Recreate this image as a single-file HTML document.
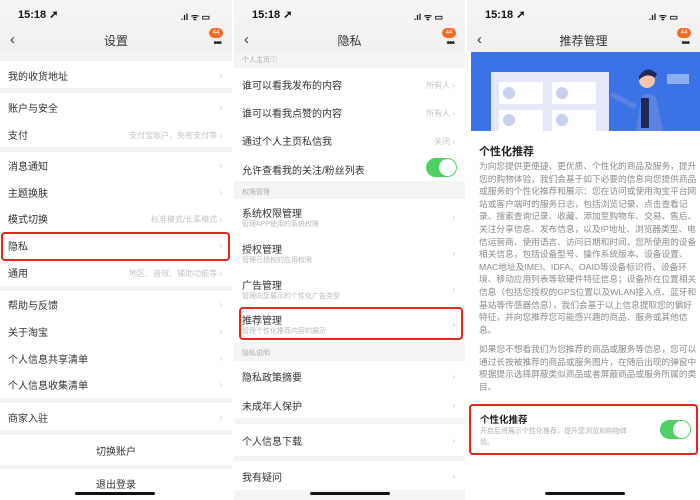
<!DOCTYPE html>
<html><head><meta charset="utf-8"><style>
*{margin:0;padding:0;box-sizing:border-box}
body{width:700px;height:500px;overflow:hidden;background:#fff;font-family:"Liberation Sans","Noto Sans CJK SC",sans-serif;position:relative;color:#333}
.p{position:absolute;top:0;height:500px;overflow:hidden;background:#f4f4f4}
.a{position:absolute;white-space:nowrap}
.hdr{position:absolute;left:0;top:0;width:100%;height:52px;background:linear-gradient(#f7f5f3,#f2f0ef)}
.time{position:absolute;left:18px;top:8px;font-size:11px;font-weight:bold;color:#111}
.icons{position:absolute;right:22px;top:10px;font-size:9px;font-weight:bold;color:#111}
.back{position:absolute;left:10px;top:31px;font-size:15px;color:#333}
.title{position:absolute;left:0;width:100%;top:32px;text-align:center;font-size:12px;color:#333}
.badge{position:absolute;right:9px;top:28px;width:14px;height:10px;border-radius:5px;background:#f46a25;color:#fff;font-size:6px;text-align:center;line-height:10px}
.dots{position:absolute;right:11px;top:38px;font-size:10px;letter-spacing:-1px;color:#222;font-weight:bold}
.row{position:absolute;left:0;width:100%;background:#fff}
.row .t{position:absolute;left:8px;font-size:10px;color:#333}
.row .r{position:absolute;right:10px;font-size:8px;color:#c4c4c4;margin-top:2px}
.sub{position:absolute;left:8px;font-size:7px;color:#b8b8b8}
.lab{position:absolute;left:8px;font-size:7px;color:#aaa}
.red{position:absolute;border:2.5px solid #e2261c;border-radius:4px}
.tg{position:absolute;width:31px;height:19px;border-radius:10px;background:#4cd264}
.tg:after{content:"";position:absolute;right:1px;top:1px;width:17px;height:17px;border-radius:50%;background:#fff}
.home{position:absolute;bottom:5px;width:80px;height:3px;border-radius:2px;background:#111}
.para{position:absolute;left:12px;font-size:8.7px;line-height:12.6px;color:#8a8a8a;white-space:nowrap}
</style></head><body>

<!-- Panel 1 -->
<div class="p" style="left:0;width:232px">
<div class="hdr"></div>
<div class="time">15:18 ➚</div><div class="icons">.ıl ᯤ ▭</div>
<div class="back">‹</div><div class="title">设置</div><div class="badge">44</div><div class="dots">•••</div>
<div class="row" style="top:61px;height:27px"><span class="t" style="top:7px">我的收货地址</span><span class="r" style="top:8px">›</span></div>
<div class="row" style="top:93px;height:54px"><span class="t" style="top:7px">账户与安全</span><span class="r" style="top:8px">›</span><span class="t" style="top:34px">支付</span><span class="r" style="top:35px">支付宝账户、免密支付等 ›</span></div>
<div class="row" style="top:152px;height:134px">
<span class="t" style="top:6px">消息通知</span><span class="r" style="top:7px">›</span>
<span class="t" style="top:33px">主题换肤</span><span class="r" style="top:34px">›</span>
<span class="t" style="top:59px">模式切换</span><span class="r" style="top:60px">标准模式/长辈模式 ›</span>
<span class="t" style="top:86px">隐私</span><span class="r" style="top:87px">›</span>
<span class="t" style="top:113px">通用</span><span class="r" style="top:114px">地区、音效、辅助功能等 ›</span></div>
<div class="red" style="left:1px;top:232px;width:229px;height:29px"></div>
<div class="row" style="top:291px;height:107px">
<span class="t" style="top:6px">帮助与反馈</span><span class="r" style="top:7px">›</span>
<span class="t" style="top:33px">关于淘宝</span><span class="r" style="top:34px">›</span>
<span class="t" style="top:60px">个人信息共享清单</span><span class="r" style="top:61px">›</span>
<span class="t" style="top:86px">个人信息收集清单</span><span class="r" style="top:87px">›</span></div>
<div class="row" style="top:403px;height:27px"><span class="t" style="top:7px">商家入驻</span><span class="r" style="top:8px">›</span></div>
<div class="row" style="top:435px;height:30px"><span class="t" style="left:0;width:100%;text-align:center;top:8px">切换账户</span></div>
<div class="row" style="top:469px;height:31px"><span class="t" style="left:0;width:100%;text-align:center;top:7px">退出登录</span></div>
<div class="home" style="left:75px"></div>
</div>

<!-- Panel 2 -->
<div class="p" style="left:234px;width:231px">
<div class="hdr"></div>
<div class="time">15:18 ➚</div><div class="icons">.ıl ᯤ ▭</div>
<div class="back">‹</div><div class="title">隐私</div><div class="badge">44</div><div class="dots">•••</div>
<div class="lab" style="top:55px">个人主页ⓘ</div>
<div class="row" style="top:68px;height:113px">
<span class="t" style="top:9px">谁可以看我发布的内容</span><span class="r" style="top:10px">所有人 ›</span>
<span class="t" style="top:37px">谁可以看我点赞的内容</span><span class="r" style="top:38px">所有人 ›</span>
<span class="t" style="top:65px">通过个人主页私信我</span><span class="r" style="top:66px">关闭 ›</span>
<span class="t" style="top:94px">允许查看我的关注/粉丝列表</span></div>
<div class="tg" style="left:192px;top:158px"></div>
<div class="lab" style="top:187px">权限管理</div>
<div class="row" style="top:199px;height:143px">
<span class="t" style="top:6px">系统权限管理</span><span class="sub" style="top:20px">管理APP使用的系统权限</span><span class="r" style="top:12px">›</span>
<span class="t" style="top:42px">授权管理</span><span class="sub" style="top:56px">管理已授权的应用权限</span><span class="r" style="top:48px">›</span>
<span class="t" style="top:78px">广告管理</span><span class="sub" style="top:92px">管理向您展示的个性化广告类型</span><span class="r" style="top:84px">›</span>
<span class="t" style="top:113px">推荐管理</span><span class="sub" style="top:127px">管理个性化推荐内容的展示</span><span class="r" style="top:119px">›</span></div>
<div class="red" style="left:5px;top:307px;width:224px;height:33px"></div>
<div class="lab" style="top:348px">隐私说明</div>
<div class="row" style="top:361px;height:57px">
<span class="t" style="top:8px">隐私政策摘要</span><span class="r" style="top:9px">›</span>
<span class="t" style="top:37px">未成年人保护</span><span class="r" style="top:38px">›</span></div>
<div class="row" style="top:424px;height:32px"><span class="t" style="top:9px">个人信息下载</span><span class="r" style="top:10px">›</span></div>
<div class="row" style="top:461px;height:29px"><span class="t" style="top:8px">我有疑问</span><span class="r" style="top:9px">›</span></div>
<div class="home" style="left:76px"></div>
</div>

<!-- Panel 3 -->
<div class="p" style="left:467px;width:233px;background:#fff">
<div class="hdr"></div>
<div class="time">15:18 ➚</div><div class="icons">.ıl ᯤ ▭</div>
<div class="back">‹</div><div class="title">推荐管理</div><div class="badge">44</div><div class="dots">•••</div>
<svg class="a" style="left:4px;top:52px" width="229" height="79" viewBox="0 0 229 79">
<rect width="229" height="79" fill="#3b73e6"/>
<rect x="20" y="20" width="118" height="59" fill="#e4e8f8"/>
<rect x="28" y="30" width="44" height="22" fill="#fff"/><circle cx="38" cy="41" r="6" fill="#c9d1f2"/>
<rect x="81" y="30" width="44" height="22" fill="#fff"/><circle cx="91" cy="41" r="6" fill="#c9d1f2"/>
<rect x="28" y="58" width="44" height="21" fill="#fff"/><circle cx="38" cy="68" r="6" fill="#c9d1f2"/>
<rect x="81" y="58" width="44" height="21" fill="#fff"/><circle cx="91" cy="68" r="6" fill="#c9d1f2"/>
<path d="M165 79 L170 45 Q176 38 185 45 L192 79 Z" fill="#5b82e0"/>
<circle cx="176" cy="28" r="8" fill="#f2c6a8"/><path d="M168 24 Q176 12 186 22 L184 26 Q176 20 168 28Z" fill="#1f2a5a"/>
<rect x="170" y="46" width="8" height="30" fill="#1f2a5a"/>
<path d="M165 55 L140 42" stroke="#5b82e0" stroke-width="5"/>
<rect x="196" y="22" width="22" height="10" fill="#8fb0f0"/>
</svg>
<div class="a" style="left:12px;top:143px;font-size:11px;font-weight:bold;color:#222">个性化推荐</div>
<div class="para" style="top:160px">为向您提供更便捷、更优质、个性化的商品及服务，提升<br>您的购物体验，我们会基于如下必要的信息向您提供商品<br>或服务的个性化推荐和展示：您在访问或使用淘宝平台网<br>站或客户端时的服务日志，包括浏览记录、点击查看记<br>录、搜索查询记录、收藏、添加至购物车、交易、售后、<br>关注分享信息、发布信息，以及IP地址、浏览器类型、电<br>信运营商、使用语言、访问日期和时间、您所使用的设备<br>相关信息，包括设备型号、操作系统版本、设备设置、<br>MAC地址及IMEI、IDFA、OAID等设备标识符、设备环<br>境、移动应用列表等软硬件特征信息；设备所在位置相关<br>信息（包括您授权的GPS位置以及WLAN接入点、蓝牙和<br>基站等传感器信息），我们会基于以上信息提取您的偏好<br>特征，并向您推荐您可能感兴趣的商品、服务或其他信<br>息。</div>
<div class="para" style="top:343px">如果您不想看我们为您推荐的商品或服务等信息，您可以<br>通过长按被推荐的商品或服务图片，在随后出现的弹窗中<br>根据提示选择屏蔽类似商品或者屏蔽商品或服务所属的类<br>目。</div>
<div class="red" style="left:2px;top:404px;width:229px;height:51px"></div>
<div class="a" style="left:13px;top:412px;font-size:9.5px;font-weight:bold;color:#222">个性化推荐</div>
<div class="a" style="left:13px;top:426px;font-size:7px;line-height:11px;color:#b0b0b0">开启后将展示个性化推荐，提升您浏览和购物体<br>验。</div>
<div class="tg" style="left:193px;top:420px"></div>
<div class="home" style="left:78px"></div>
</div>
</body></html>
